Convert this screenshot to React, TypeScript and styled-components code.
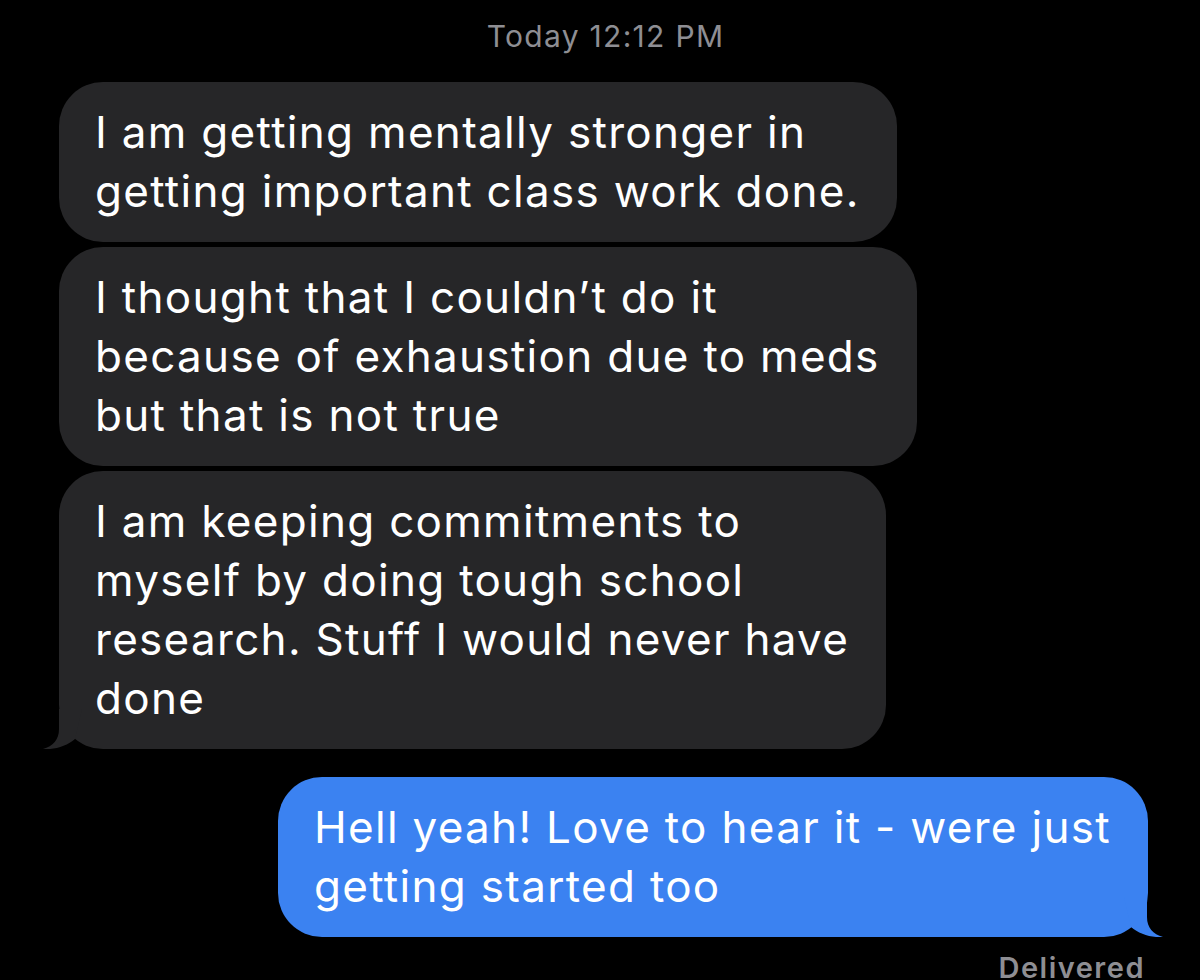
import React from "react";
import styled, { createGlobalStyle } from "styled-components";

type Side = "them" | "me";

type Message = {
  side: Side;
  lines: string[];
  tail?: boolean;
};

const messages: Message[] = [
  {
    side: "them",
    lines: ["I am getting mentally stronger in", "getting important class work done."],
  },
  {
    side: "them",
    lines: [
      "I thought that I couldn\u2019t do it",
      "because of exhaustion due to meds",
      "but that is not true",
    ],
  },
  {
    side: "them",
    lines: [
      "I am keeping commitments to",
      "myself by doing tough school",
      "research. Stuff I would never have",
      "done",
    ],
    tail: true,
  },
  {
    side: "me",
    lines: ["Hell yeah! Love to hear it - were just", "getting started too"],
    tail: true,
  },
];

const colors = {
  them: "#262628",
  me: "#3b82f1",
};

const Tail: React.FC<{ side: Side }> = ({ side }) => (
  <TailSvg $side={side} width="42" height="40" viewBox="0 0 42 40">
    <path
      d="M17 0 L17 20 C17 31 11 37 1 40 C12 41 25 37 33 30 L40 0 Z"
      fill={colors[side]}
    />
  </TailSvg>
);

export default function App() {
  return (
    <>
      <GlobalStyle />
      <Screen>
        <Timestamp>Today 12:12 PM</Timestamp>
        <Thread>
          {messages.map((m, i) => (
            <Bubble key={i} $side={m.side}>
              {m.lines.map((line, j) => (
                <React.Fragment key={j}>
                  {j > 0 && <br />}
                  {line}
                </React.Fragment>
              ))}
              {m.tail && <Tail side={m.side} />}
            </Bubble>
          ))}
        </Thread>
        <Status>Delivered</Status>
      </Screen>
    </>
  );
}

const GlobalStyle = createGlobalStyle`
  html, body {
    margin: 0;
    padding: 0;
    background: #000;
  }
  body {
    font-family: Inter, "Noto Sans", "Liberation Sans", sans-serif;
    -webkit-font-smoothing: antialiased;
  }
`;

const Screen = styled.div`
  width: 1200px;
  height: 980px;
  overflow: hidden;
  background: #000;
  box-sizing: border-box;
  padding: 18px 52px 0 59px;
  display: flex;
  flex-direction: column;
`;

const Timestamp = styled.div`
  color: #8e8e93;
  font-size: 30px;
  line-height: 36px;
  letter-spacing: 1.3px;
  text-align: center;
  padding-left: 4px;
  margin-bottom: 28px;
`;

const Thread = styled.div`
  display: flex;
  flex-direction: column;
  gap: 5px;
`;

const Bubble = styled.div<{ $side: Side }>`
  position: relative;
  align-self: ${({ $side }) => ($side === "me" ? "flex-end" : "flex-start")};
  margin-top: ${({ $side }) => ($side === "me" ? "23px" : "0")};
  background: ${({ $side }) => colors[$side]};
  color: #fff;
  font-size: 44px;
  line-height: 59px;
  letter-spacing: 1.3px;
  padding: 21px 37px 21px 36px;
  border-radius: 44px;
  white-space: nowrap;
`;

const TailSvg = styled.svg<{ $side: Side }>`
  position: absolute;
  bottom: 0;
  ${({ $side }) =>
    $side === "me"
      ? "right: -16px; transform: scaleX(-1);"
      : "left: -17px;"}
`;

const Status = styled.div`
  align-self: flex-end;
  margin-top: 14px;
  margin-right: 3px;
  color: #8e8e93;
  font-size: 29px;
  font-weight: 600;
  letter-spacing: 1.5px;
  line-height: 34px;
`;
